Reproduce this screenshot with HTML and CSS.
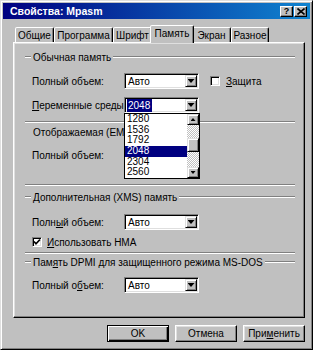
FILE: index.html
```html
<!DOCTYPE html>
<html lang="ru">
<head>
<meta charset="utf-8">
<title>Свойства: Mpasm</title>
<link rel="stylesheet" href="styles.css">
</head>
<body>
<div class="window">
  <div class="titlebar">
    <span class="title">Свойства: Mpasm</span>
    <div class="tbtns">
      <span class="tbtn">?</span>
      <span class="tbtn"><svg width="8" height="7" viewBox="0 0 8 7"><path d="M0.5 0.5 L7.5 6.5 M7.5 0.5 L0.5 6.5" stroke="#000" stroke-width="1.6"/></svg></span>
    </div>
  </div>
  <div class="client">
    <div class="tabs">
      <div class="tab t1">Общие</div>
      <div class="tab t2">Программа</div>
      <div class="tab t3">Шрифт</div>
      <div class="tab t4 active">Память</div>
      <div class="tab t5">Экран</div>
      <div class="tab t6">Разное</div>
    </div>
    <div class="panel">
      <div class="ghead g1"><span>Обычная память</span></div>
      <div class="row r1">
        <span class="label">Полный объем:</span>
        <div class="combo"><span class="val">Авто</span><span class="dd"></span></div>
        <div class="check"><span class="box"></span><span><u>З</u>ащита</span></div>
      </div>
      <div class="row r2">
        <span class="label"><u>П</u>еременные среды:</span>
        <div class="combo">
          <span class="val"><span class="hl">2048</span></span><span class="dd"></span>
          <div class="list">
            <div class="items">
              <div class="item">1280</div>
              <div class="item">1536</div>
              <div class="item">1792</div>
              <div class="item on">2048</div>
              <div class="item">2304</div>
              <div class="item">2560</div>
            </div>
            <div class="sbar">
              <span class="sbtn up"></span>
              <div class="track"><span class="thumb"></span></div>
              <span class="sbtn down"></span>
            </div>
          </div>
        </div>
      </div>
      <div class="sep s1"></div>
      <div class="ghead plain g2"><span>Отображаемая (EMS) память</span></div>
      <div class="row r3">
        <span class="label">Полный объем:</span>
        <div class="combo"><span class="dd"></span></div>
      </div>
      <div class="sep s2"></div>
      <div class="ghead g3"><span>Дополнительная (XMS) память</span></div>
      <div class="row r4">
        <span class="label">Полн<u>ы</u>й объем:</span>
        <div class="combo"><span class="val">Авто</span><span class="dd"></span></div>
      </div>
      <div class="check-row r5">
        <span class="box checked"><svg width="8" height="8" viewBox="0 0 8 8"><path d="M1 3.5 L3 5.8 L7 1.5" fill="none" stroke="#000" stroke-width="1.7"/></svg></span>
        <span><u>И</u>спользовать HMA</span>
      </div>
      <div class="sep s3"></div>
      <div class="ghead g4"><span>Пам<u>я</u>ть DPMI для защищенного режима MS-DOS</span></div>
      <div class="row r6">
        <span class="label">Полный о<u>б</u>ъем:</span>
        <div class="combo"><span class="val">Авто</span><span class="dd"></span></div>
      </div>
    </div>
    <div class="buttons">
      <div class="btn default">OK</div>
      <div class="btn">Отмена</div>
      <div class="btn">При<u>м</u>енить</div>
    </div>
  </div>
</div>
</body>
</html>
```
FILE: styles.css
```css
body {
  margin: 0;
  background: #fff;
  font-family: "Liberation Sans", Arial, sans-serif;
  font-size: 10px;
  color: #000;
}
u { text-decoration: underline; text-underline-offset: 1px; }

.window {
  width: 313px;
  height: 350px;
  box-sizing: border-box;
  background: #c0c0c0;
  border: 1px solid;
  border-color: #dfdfdf #000 #000 #dfdfdf;
  box-shadow: inset 1px 1px #fff, inset -1px -1px #808080;
  padding: 2px;
  display: flex;
  flex-direction: column;
}

.titlebar {
  height: 16px;
  flex: none;
  background: linear-gradient(to right, #000080, #1084d0);
  display: flex;
  align-items: center;
  padding: 0 3px 0 7px;
  color: #fff;
  font-weight: bold;
  font-size: 10.5px;
}
.title { flex: 1; }
.tbtns { display: flex; gap: 1px; }
.tbtn {
  width: 13px;
  height: 11px;
  box-sizing: border-box;
  background: #c0c0c0;
  border: 1px solid;
  border-color: #fff #000 #000 #fff;
  box-shadow: inset -1px -1px #808080;
  display: flex;
  align-items: center;
  justify-content: center;
  color: #000;
  font-size: 9px;
  font-weight: bold;
  line-height: 1;
}

.client {
  flex: 1;
  padding: 6px 5px 0 10px;
  display: flex;
  flex-direction: column;
}

.tabs {
  display: flex;
  align-items: flex-end;
  height: 17px;
  padding-left: 2px;
}
.tab {
  height: 15px;
  box-sizing: border-box;
  border: 1px solid;
  border-bottom: none;
  border-color: #fff #000 transparent #fff;
  border-radius: 2px 2px 0 0;
  box-shadow: inset -1px 0 #808080;
  display: flex;
  align-items: center;
  justify-content: center;
  white-space: nowrap;
  background: #c0c0c0;
}
.t1 { width: 39px; }
.t2 { width: 59px; }
.t3 { width: 39px; }
.t4 { width: 44px; }
.t5 { width: 39px; }
.t6 { width: 38px; }
.tab.active {
  height: 18px;
  margin: 0 -2px -1px;
  padding-bottom: 2px;
  position: relative;
  z-index: 1;
}

.panel {
  height: 276px;
  box-sizing: border-box;
  border: 1px solid;
  border-color: #fff #000 #000 #fff;
  box-shadow: inset -1px -1px #808080, inset 1px 1px #dfdfdf;
  padding: 0 9px 0 11px;
  display: flex;
  flex-direction: column;
}

.ghead {
  display: flex;
  align-items: center;
  height: 12px;
  white-space: nowrap;
}
.ghead::before,
.ghead::after {
  content: "";
  border-top: 1px solid #808080;
  border-bottom: 1px solid #fff;
}
.ghead::before { width: 6px; margin-right: 2px; }
.ghead::after { flex: 1; margin-left: 2px; }
.ghead.plain { padding-left: 8px; }
.ghead.plain::before,
.ghead.plain::after { display: none; }

.sep {
  border-top: 1px solid #808080;
  border-bottom: 1px solid #fff;
}

.row {
  display: flex;
  align-items: center;
  height: 16px;
  padding-left: 7px;
}
.label { width: 92px; white-space: nowrap; }

.combo {
  position: relative;
  width: 75px;
  height: 16px;
  box-sizing: border-box;
  background: #fff;
  border: 1px solid;
  border-color: #808080 #fff #fff #808080;
  box-shadow: inset 1px 1px #000, inset -1px -1px #dfdfdf;
  padding: 1px 1px 1px 2px;
  display: flex;
  align-items: center;
  justify-content: flex-end;
}
.val { flex: 1; padding-left: 1px; }
.hl { background: #000080; color: #fff; padding: 1px 2px 1px 1px; margin-left: -1px; }
.dd {
  width: 12px;
  height: 12px;
  box-sizing: border-box;
  background: #c0c0c0;
  border: 1px solid;
  border-color: #dfdfdf #000 #000 #dfdfdf;
  box-shadow: inset 1px 1px #fff, inset -1px -1px #808080;
  display: flex;
  align-items: center;
  justify-content: center;
}
.dd::after {
  content: "";
  width: 7px;
  height: 4px;
  background: #000;
  clip-path: polygon(0 0, 100% 0, 50% 100%);
}

.list {
  position: absolute;
  left: -1px;
  top: calc(100% + 1px);
  width: 76px;
  height: 66px;
  box-sizing: border-box;
  border: 1px solid #000;
  background: #fff;
  display: flex;
  z-index: 2;
}
.items { flex: 1; }
.item {
  height: 10.67px;
  line-height: 10.67px;
  padding-left: 2px;
}
.item.on { background: #000080; color: #fff; }
.sbar {
  width: 12px;
  display: flex;
  flex-direction: column;
}
.sbtn,
.thumb {
  display: flex;
  align-items: center;
  justify-content: center;
  box-sizing: border-box;
  background: #c0c0c0;
  border: 1px solid;
  border-color: #dfdfdf #000 #000 #dfdfdf;
  box-shadow: inset 1px 1px #fff, inset -1px -1px #808080;
}
.sbtn { height: 11px; }
.sbtn::after {
  content: "";
  width: 5px;
  height: 3px;
  background: #000;
}
.sbtn.up::after { clip-path: polygon(50% 0, 100% 100%, 0 100%); }
.sbtn.down::after { clip-path: polygon(0 0, 100% 0, 50% 100%); }
.track {
  flex: 1;
  background: repeating-conic-gradient(#c0c0c0 0 25%, #fff 0 50%) 0 0 / 2px 2px;
}
.thumb { margin-top: 13px; height: 14px; }

.check {
  display: flex;
  align-items: center;
  gap: 6px;
  margin-left: 11px;
}
.box {
  width: 10px;
  height: 10px;
  box-sizing: border-box;
  background: #fff;
  border: 1px solid;
  border-color: #808080 #fff #fff #808080;
  box-shadow: inset 1px 1px #000, inset -1px -1px #dfdfdf;
  display: flex;
  align-items: center;
  justify-content: center;
  flex: none;
}
.check-row {
  display: flex;
  align-items: center;
  gap: 5px;
  height: 12px;
  padding-left: 7px;
}

.g1 { margin-top: 8px; }
.r1 { margin-top: 10px; }
.r2 { margin-top: 8px; }
.s1 { margin-top: 8px; }
.g2 { margin-top: 3px; }
.r3 { margin-top: 9px; }
.s2 { margin-top: 21px; }
.g3 { margin-top: 5px; }
.r4 { margin-top: 11px; }
.r5 { margin-top: 6px; }
.s3 { margin-top: 4px; }
.g4 { margin-top: 2px; }
.r6 { margin-top: 9px; }

.buttons {
  display: flex;
  justify-content: flex-end;
  gap: 6px;
  margin-top: 7px;
}
.btn {
  width: 62px;
  height: 17px;
  box-sizing: border-box;
  border: 1px solid;
  border-color: #fff #000 #000 #fff;
  box-shadow: inset -1px -1px #808080, inset 1px 1px #dfdfdf;
  display: flex;
  align-items: center;
  justify-content: center;
}
.btn.default {
  border-color: #000;
  box-shadow: inset 1px 1px #fff, inset -1px -1px #000, inset -2px -2px #808080;
}
```
